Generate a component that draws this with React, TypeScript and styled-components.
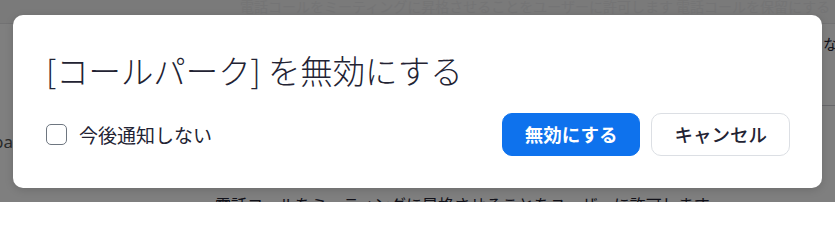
import React, { useState } from "react";
import styled, { createGlobalStyle } from "styled-components";

const GlobalStyle = createGlobalStyle`
  html, body {
    margin: 0;
    padding: 0;
    height: 202px;
    overflow: hidden;
  }
  body {
    font-family: "Noto Sans CJK JP", "Noto Sans", sans-serif;
    background: #fff;
  }
  #root {
    height: 202px;
    overflow: hidden;
  }
  * {
    box-sizing: border-box;
  }
`;

const Page = styled.div`
  position: relative;
  width: 835px;
  height: 202px;
  overflow: hidden;
  background: #fff;
  color: #232333;
  display: flex;
  flex-direction: column;
`;

const TopBar = styled.div`
  height: 24px;
  flex: none;
  background: #f4f4f5;
  border-bottom: 1px solid #e4e4e7;
  padding-left: 240px;
  font-size: 14px;
  line-height: 12px;
  color: #e9e9ea;
  white-space: nowrap;
  overflow: hidden;
`;

const Section = styled.div`
  display: grid;
  grid-template-columns: 200px 623px 1fr;
  height: 82px;
  flex: none;
`;

const SectionCell = styled.div<{ $ruled?: boolean }>`
  border-bottom: ${(p) => (p.$ruled ? "1px solid #cfcfd4" : "none")};
  font-size: 15px;
  padding-top: 9px;
  white-space: nowrap;
  overflow: hidden;
`;

const SettingRow = styled.div`
  display: grid;
  grid-template-columns: 13px 1fr;
  align-items: center;
  height: 70px;
  flex: none;
`;

const Label = styled.div`
  font-family: "Noto Sans", sans-serif;
  font-size: 17px;
  color: #555;
  direction: rtl;
  overflow: hidden;
  white-space: nowrap;
`;

const Hint = styled.div`
  flex: none;
  padding-left: 215px;
  padding-top: 16px;
  font-size: 16px;
  line-height: 24px;
  color: #232333;
  white-space: nowrap;
`;

const Overlay = styled.div`
  position: absolute;
  inset: 0;
  background: rgba(0, 0, 0, 0.5);
  display: flex;
  align-items: center;
  justify-content: center;
`;

const Modal = styled.div`
  width: 809px;
  height: 173px;
  background: #fff;
  border-radius: 10px;
  box-shadow: 0 2px 8px rgba(0, 0, 0, 0.15);
  padding: 35px 32px 32px 33px;
  display: flex;
  flex-direction: column;
  justify-content: space-between;
`;

const Title = styled.h2`
  margin: 0;
  font-size: 32.4px;
  line-height: 40px;
  font-weight: 300;
  color: #232333;
  white-space: nowrap;
`;

const Footer = styled.div`
  display: flex;
  align-items: center;
  justify-content: space-between;
`;

const CheckLabel = styled.label`
  display: flex;
  align-items: center;
  gap: 12px;
  font-size: 19px;
  color: #232333;
  cursor: pointer;
`;

const Box = styled.span<{ $checked: boolean }>`
  width: 21px;
  height: 21px;
  border: 1.5px solid #6e7680;
  border-radius: 5px;
  background: ${(p) => (p.$checked ? "#0e72ed" : "#fff")};
  border-color: ${(p) => (p.$checked ? "#0e72ed" : "#6e7680")};
  display: flex;
  align-items: center;
  justify-content: center;
`;

const HiddenInput = styled.input`
  display: none;
`;

const Actions = styled.div`
  display: flex;
  gap: 11px;
`;

const Button = styled.button<{ $primary?: boolean }>`
  height: 43px;
  padding: 0 22px;
  border-radius: 10px;
  font-family: "Noto Sans CJK JP", sans-serif;
  font-size: 18.5px;
  font-weight: ${(p) => (p.$primary ? 700 : 500)};
  color: ${(p) => (p.$primary ? "#fff" : "#232333")};
  background: ${(p) => (p.$primary ? "#0e72ed" : "#fff")};
  border: 1px solid ${(p) => (p.$primary ? "#0e72ed" : "#dcdfe4")};
  cursor: pointer;
`;

const App = () => {
  const [checked, setChecked] = useState(false);

  return (
    <>
      <GlobalStyle />
      <Page>
        <TopBar>
          電話コールをミーティングに昇格させることをユーザーに許可します 電話コールを保留にする
        </TopBar>
        <Section>
          <SectionCell />
          <SectionCell $ruled />
          <SectionCell $ruled>なし</SectionCell>
        </Section>
        <SettingRow>
          <Label>Call pa</Label>
          <div />
        </SettingRow>
        <Hint>電話コールをミーティングに昇格させることをユーザーに許可します</Hint>

        <Overlay>
          <Modal role="dialog" aria-modal="true">
            <Title>[コールパーク] を無効にする</Title>
            <Footer>
              <CheckLabel>
                <HiddenInput
                  type="checkbox"
                  checked={checked}
                  onChange={(e) => setChecked(e.target.checked)}
                />
                <Box $checked={checked}>
                  {checked && (
                    <svg width="13" height="13" viewBox="0 0 12 12">
                      <path
                        d="M2 6.2l2.6 2.6L10 3.4"
                        fill="none"
                        stroke="#fff"
                        strokeWidth="1.8"
                        strokeLinecap="round"
                        strokeLinejoin="round"
                      />
                    </svg>
                  )}
                </Box>
                今後通知しない
              </CheckLabel>
              <Actions>
                <Button $primary>無効にする</Button>
                <Button>キャンセル</Button>
              </Actions>
            </Footer>
          </Modal>
        </Overlay>
      </Page>
    </>
  );
};

export default App;
